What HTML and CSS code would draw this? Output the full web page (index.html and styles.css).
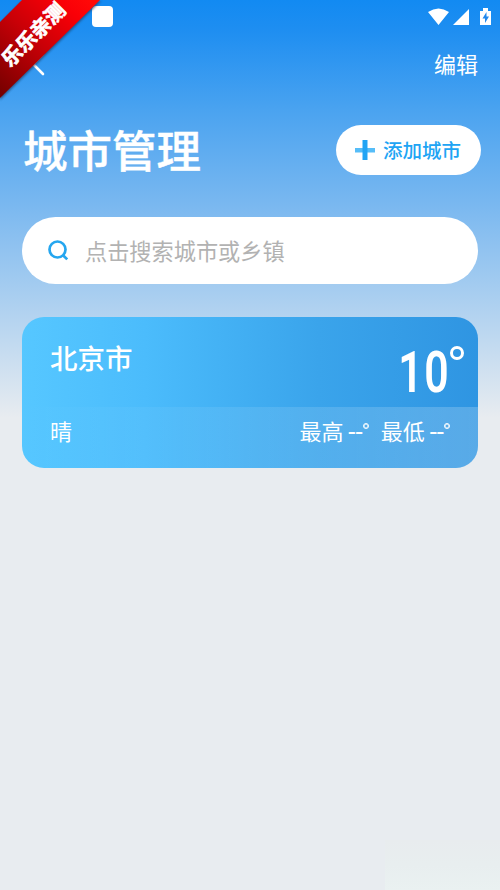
FILE: index.html
```html
<!DOCTYPE html>
<html lang="zh-CN">
<head>
<meta charset="utf-8">
<title>城市管理</title>
<link rel="stylesheet" href="styles.css">
</head>
<body>
<div class="screen">
  <header class="status">
    <span class="notice"></span>
    <svg class="system" width="64" height="20" viewBox="0 0 64 20">
      <path fill="#fff" d="M0 4Q10.500-3 21 4L10.500 17ZM25 17L41 1V17ZM52 3H55V0H60V3H63V17H52Z"/>
      <path fill="#2188ed" d="M58.500 4L54.500 10.500H57V15L61 8.500H58.500Z"/>
    </svg>
  </header>
  <nav class="nav">
    <svg class="back" width="14" height="24" viewBox="0 0 14 24"><path d="M12 2L2 12L12 22" fill="none" stroke="#fff" stroke-width="2.600" stroke-linecap="round"/></svg>
    <span class="edit">编辑</span>
  </nav>
  <section class="heading">
    <h1>城市管理</h1>
    <button class="add">
      <svg width="20" height="20" viewBox="0 0 20 20"><path fill="#56bdf8" d="M0 8H20V12.500H0Z"/><path fill="#20a4f4" d="M7.500 0H12.500V20H7.500Z"/></svg>
      <span>添加城市</span>
    </button>
  </section>
  <div class="search">
    <svg width="22" height="22" viewBox="0 0 22 22" fill="none" stroke="#25a6ef" stroke-width="2.700"><circle cx="9.500" cy="9.500" r="8"/><path d="M15.300 15.500L19.200 19.400"/></svg>
    <span>点击搜索城市或乡镇</span>
  </div>
  <article class="card">
    <div class="current">
      <h2>北京市</h2>
      <div class="temperature"><span class="digits">10</span><i class="degree"></i></div>
    </div>
    <div class="forecast">
      <span>晴</span>
      <div class="range"><span class="limit">最高 <b>--</b><i></i></span><span class="limit">最低 <b>--</b><i></i></span></div>
    </div>
  </article>
  <div class="corner-glow"></div>
  <div class="ribbon">
    <svg width="110" height="110" viewBox="0 0 110 110">
      <defs>
        <linearGradient id="red" gradientUnits="userSpaceOnUse" x1="0" y1="95" x2="88" y2="0"><stop offset="0" stop-color="#750000"/><stop offset=".5" stop-color="#c90007"/><stop offset=".85" stop-color="#fa0007"/><stop offset="1" stop-color="#ff0808"/></linearGradient>
        <filter id="shade"><feGaussianBlur stdDeviation="1.200"/></filter>
      </defs>
      <path d="M22 1H101L0 100V23Z" fill="#253b60" opacity=".7" filter="url(#shade)"/>
      <path d="M22 0H100L0 98V22Z" fill="url(#red)"/>
    </svg>
    <span class="ribbon-text">乐乐亲测</span>
  </div>
</div>
</body>
</html>
```
FILE: styles.css
```css
* { box-sizing: border-box; }
body { margin: 0; font-family: "Noto Sans CJK SC", sans-serif; color: #fff; }
h1, h2 { margin: 0; font-weight: 500; }
.screen {
  position: relative;
  width: 500px;
  height: 890px;
  overflow: hidden;
  padding: 0 22px;
  background: linear-gradient(#128af2 0, #1e8ef1 30px, #4aa3f0 110px, #7ab8f0 205px, #afd1f0 308px, #e8ecf0 418px, #e8ecf0 100%);
}
.status { height: 40px; margin-right: -14px; display: flex; align-items: flex-start; justify-content: space-between; }
.notice { width: 21px; height: 21px; margin: 6px 0 0 70px; border-radius: 4px; background: #fff; }
.system { margin: 8px 0 0 0; }
.nav { height: 48px; display: flex; align-items: center; justify-content: space-between; padding-left: 9px; }
.back { margin-top: 0; }
.edit { font-size: 22px; line-height: 32px; margin-top: -3px; }
.heading { height: 50px; margin: 37px -3px 0 1px; display: flex; align-items: center; justify-content: space-between; }
h1 { font-size: 44.500px; line-height: 50px; margin-top: -3px; -webkit-text-stroke: .4px #fff; }
.add { width: 145px; height: 50px; border: 0; border-radius: 25px; padding: 0 1px 0 0; background: #fff; color: #20a4f4; display: flex; align-items: center; justify-content: center; gap: 8px; font: 500 19.500px/30px "Noto Sans CJK SC", sans-serif; }
.search { height: 67px; margin-top: 42px; padding-left: 26px; border-radius: 34px; background: #fff; display: flex; align-items: center; gap: 15px; color: #b2b2b2; font-size: 22.200px; line-height: 32px; }
.search span { margin-top: -2px; }
.card { height: 151px; margin-top: 33px; border-radius: 22px; overflow: hidden; background: linear-gradient(90deg, #56c7ff, #4bbcfc 27%, #3aa4eb 65%, #2f95e2); }
.current { height: 90px; padding: 0 14px 0 28px; display: flex; justify-content: space-between; }
h2 { font-size: 27.500px; line-height: 40px; margin-top: 20px; }
.temperature { display: flex; align-items: flex-start; padding-top: 27px; }
.digits { font: 600 57px/57px Roboto, sans-serif; transform: scaleX(.75); transform-origin: right; letter-spacing: 2px; margin-right: 0; }
.degree { width: 14px; height: 14px; margin-top: 2px; border: 3px solid #fff; border-radius: 50%; }
.forecast { height: 61px; padding: 0 28px; display: flex; justify-content: space-between; background: linear-gradient(90deg, rgba(255,255,255,0), rgba(255,255,255,.05) 30%, rgba(255,255,255,.2)); font-size: 22px; line-height: 46px; }
.range, .limit { display: flex; }
.range { gap: 12px; }
.limit { white-space: pre; }
.limit b { font: 400 26px/50px Roboto, sans-serif; }
.limit i { width: 6px; height: 6px; margin: 16px 0 0 0; border: 1.500px solid #fff; border-radius: 50%; box-shadow: inset 0 0 0 .5px #fff; }
.corner-glow { position: absolute; right: 0; bottom: 0; width: 115px; height: 50px; background: linear-gradient(to bottom, #e8ecee, #e8eeef 50%, #eaf1f1); }
.ribbon { position: absolute; left: 0; top: 0; width: 110px; height: 110px; }
.ribbon svg { display: block; }
.ribbon-text { position: absolute; left: -7px; top: 20px; width: 80px; font-size: 20px; line-height: 28px; font-weight: 700; text-align: center; white-space: nowrap; transform: rotate(-45deg); -webkit-text-stroke: .7px #fff; }
```
